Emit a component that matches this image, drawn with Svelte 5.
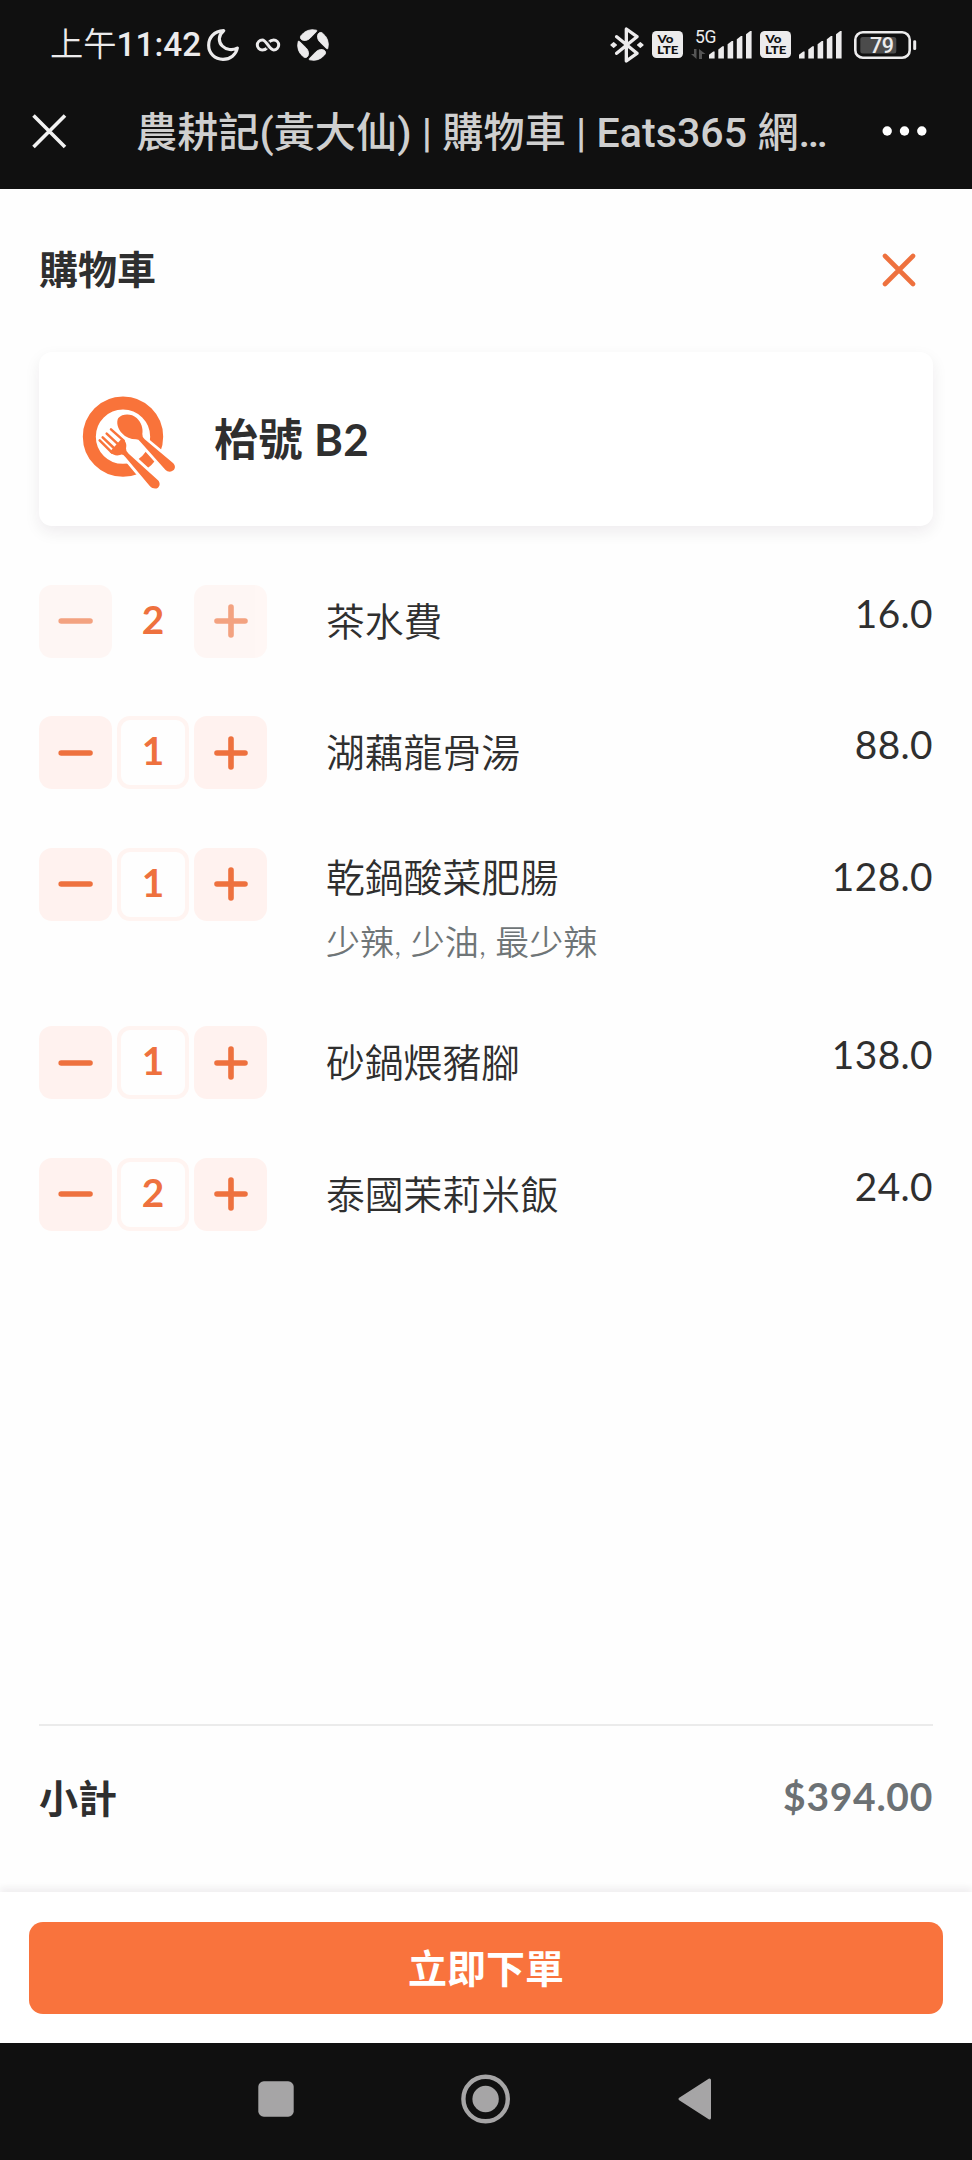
<script>
  const items = [
    { qty: 2, name: '茶水費', price: '16.0', locked: true },
    { qty: 1, name: '湖藕龍骨湯', price: '88.0' },
    { qty: 1, name: '乾鍋酸菜肥腸', price: '128.0', note: '少辣, 少油, 最少辣' },
    { qty: 1, name: '砂鍋煨豬腳', price: '138.0' },
    { qty: 2, name: '泰國茉莉米飯', price: '24.0' }
  ];
  const bars = [
    [0, 20.5], [9.3, 15.3], [18.6, 10], [27.8, 5], [37, 0]
  ];
</script>

{#snippet volte()}
  <svg class="volte" width="31" height="27" viewBox="0 0 31 27">
    <rect width="31" height="27" rx="4.5" fill="#ecebec" />
    <text x="5.4" y="12.4" textLength="16" lengthAdjust="spacingAndGlyphs" font-size="11.5">Vo</text>
    <text x="5" y="23.4" textLength="21.5" lengthAdjust="spacingAndGlyphs" font-size="12">LTE</text>
  </svg>
{/snippet}

{#snippet signal()}
  <svg class="signal" width="43" height="28" viewBox="0 0 43 28">
    {#each bars as [x, y]}
      <path d="M{x} 27.5V{y + 3.2}L{x + 4.2} {y}H{x + 5.6}V27.5Z" fill="#ecebec" />
    {/each}
  </svg>
{/snippet}

<div class="screen">
  <header class="top">
    <div class="status">
      <span class="clock"><span class="ampm">上午</span>11:42</span>
      <svg class="moon" width="32" height="32" viewBox="622 86 96 96">
        <path d="M672 91C642 92 627 113 627 135C627 160 646 177 670 177C692 177 709 163 713 143C699 151 680 149 668 137C655 124 656 104 672 91Z" fill="none" stroke="#ecebec" stroke-width="9.5" stroke-linejoin="round" />
      </svg>
      <svg class="loop" width="26" height="16" viewBox="0 0 26 16">
        <path d="M12.3 10.8C10.8 12.2 9.4 13 7.3 13A5 5 0 1 1 7.3 3C11.7 3 14.2 13 18.7 13A5 5 0 1 0 18.7 3C16.6 3 15.2 3.8 13.7 5.2" fill="none" stroke="#ecebec" stroke-width="3" />
        <path d="M9.6 8.2 13 12.6M13 3.4 16.4 7.8" stroke="#101010" stroke-width="1" />
      </svg>
      <svg class="aperture" width="32" height="32" viewBox="-16 -16 32 32">
        {#each [0, 90, 180, 270] as a}
          <path transform="rotate({a})" d="M-12.1-9.2A15.2 15.2 0 0 1 3.4-14.8C4.1-14.5 4-14 3.3-13.2L-3.2-6.6C-5.6-4.5-9-3.8-11.2-5.2C-12.6-6.2-13-8-12.1-9.2Z" fill="#ecebec" stroke="#ecebec" stroke-width=".9" />
        {/each}
      </svg>
      <div class="spacer"></div>
      <svg width="34" height="36" viewBox="372 78 102 108">
        <path d="M392 107 453 157 421 180V84L453 107 392 157" fill="none" stroke="#ecebec" stroke-width="10" stroke-linejoin="round" stroke-linecap="round" />
        <path d="M375 132 383 125 391 132 383 139ZM455 132 463 125 471 132 463 139Z" fill="#ecebec" stroke="#ecebec" stroke-width="4" stroke-linejoin="round" />
      </svg>
      {@render volte()}
      <div class="net">
        <span>5G</span>
        <svg width="15" height="10" viewBox="0 0 15 10">
          <path d="M5.5 0V10L0 5H3V0ZM8 10V0L14.5 5H11V10Z" fill="#555" />
        </svg>
      </div>
      {@render signal()}
      {@render volte()}
      {@render signal()}
      <svg class="battery" width="63" height="28" viewBox="0 0 63 28">
        <rect x="1.3" y="1.3" width="54.4" height="25.4" rx="7.5" fill="none" stroke="#ecebec" stroke-width="2.6" />
        <rect x="6.3" y="6" width="36" height="16.4" rx="2.5" fill="#4b4b4b" />
        <rect x="59.2" y="9.3" width="3" height="9.8" rx="1.3" fill="#ecebec" />
        <text x="16" y="21.7" textLength="24" font-size="21.5">79</text>
      </svg>
    </div>
    <div class="appbar">
      <svg width="35" height="35" viewBox="0 0 35 35"><path d="M1.5 1.5 33 33M33 1.5 1.5 33" stroke="#f2f2f2" stroke-width="3.6" /></svg>
      <h1>農耕記(黃大仙) | 購物車 | Eats365 網…</h1>
      <svg class="dots" width="46" height="12" viewBox="0 0 46 12" fill="#fff"><circle cx="5.2" cy="6" r="4.7" /><circle cx="22.5" cy="6" r="4.7" /><circle cx="39.8" cy="6" r="4.7" /></svg>
    </div>
  </header>

  <main>
    <div class="cart-head">
      <h2>購物車</h2>
      <svg width="34" height="34" viewBox="0 0 34 34"><path d="M3 3 31 31M31 3 3 31" stroke="#ee713e" stroke-width="4.6" stroke-linecap="round" /></svg>
    </div>

    <section class="table-card">
      <svg class="dish" width="100" height="100" viewBox="240 520 300 300">
        <circle cx="369" cy="648" r="101" fill="none" stroke="#f9733a" stroke-width="39" />
        <g fill="#f9733a" stroke="#fff" stroke-width="17" stroke-linejoin="round" paint-order="stroke">
          <path d="M355 592C368 578 394 578 410 592C424 605 430 624 427 640Q426 648 434 656L519 727C527 735 526 744 520 749C512 756 502 753 496 747L421 663Q416 656 408 656C392 656 377 650 366 638C353 624 348 604 355 592Z" />
          <path d="M366 653C378 662 381 672 378 683Q377 692 386 699L474 779C482 788 479 797 474 801C467 806 457 804 450 797L376 709Q368 699 360 703C350 706 339 704 329 694Z" />
        </g>
        <path d="M333 626 371 660M320 639 358 674M308 650 348 688M299 659 336 696" stroke="#f9733a" stroke-width="7.5" stroke-linecap="round" />
      </svg>
      <strong>枱號 B2</strong>
    </section>

    <ul class="items">
      {#each items as item}
        <li>
          <div class="stepper" class:locked={item.locked}>
            <span class="btn"><svg width="36" height="36" viewBox="0 0 36 36"><path d="M3.2 18H32" /></svg></span>
            <span class="qty">{item.qty}</span>
            <span class="btn"><svg width="36" height="36" viewBox="0 0 36 36"><path d="M4 18H32M18 4V32" /></svg></span>
          </div>
          <div class="info" class:with-note={item.note}>
            <span class="name">{item.name}</span>
            {#if item.note}<span class="note">{item.note}</span>{/if}
          </div>
          <span class="price">{item.price}</span>
        </li>
      {/each}
    </ul>

    <div class="subtotal">
      <span>小計</span>
      <span class="sum">$394.00</span>
    </div>
  </main>

  <div class="order"><button>立即下單</button></div>

  <nav>
    <svg width="36" height="36" viewBox="0 0 36 36"><rect x=".3" y=".3" width="35.4" height="35.4" rx="5.5" /></svg>
    <svg width="50" height="50" viewBox="0 0 50 50"><circle cx="24.6" cy="25" r="22.2" fill="none" stroke="#a6a5a6" stroke-width="4.4" /><circle cx="24.6" cy="25" r="13.2" /></svg>
    <svg width="34" height="42" viewBox="0 0 34 42"><path d="M2 21 31.5 2V40Z" stroke="#a6a5a6" stroke-width="3" stroke-linejoin="round" /></svg>
  </nav>
</div>

<style>
  :global(body) { margin: 0; }
  * { box-sizing: border-box; }
  svg { display: block; flex: none; }
  .screen {
    display: flex;
    flex-direction: column;
    width: 972px;
    height: 2160px;
    background: #fefefe;
    color: #2f2f2f;
    font-family: Lato, "Noto Sans CJK TC", sans-serif;
    overflow: hidden;
  }
  .top {
    height: 189px;
    background: #101010;
    color: #ecebec;
    font-family: Roboto, "Noto Sans CJK TC", sans-serif;
  }
  .status {
    display: flex;
    align-items: center;
    height: 89px;
    padding: 0 55px 0 50px;
  }
  .clock {
    font-size: 33.3px;
    line-height: 40px;
    font-weight: 500;
    white-space: nowrap;
    width: 157px;
    padding-top: 1px;
  }
  .ampm { font-weight: 350; }
  .loop { margin-left: 16px; }
  .aperture { margin-left: 16px; }
  .spacer { flex: 1; }
  .volte {
    margin-left: 8px;
    font-family: Lato, sans-serif;
    font-weight: 900;
    fill: #101010;
  }
  .net {
    display: flex;
    flex-direction: column;
    width: 26px;
    height: 29px;
    margin-left: 8px;
    margin-right: -16px;
    justify-content: space-between;
  }
  .net span {
    font-size: 17.5px;
    line-height: 14px;
    padding-left: 4px;
    letter-spacing: -.3px;
  }
  .signal { margin-left: 8px; }
  .battery {
    margin-left: 12px;
    font-weight: 500;
    fill: #ecebec;
  }
  .appbar {
    display: flex;
    align-items: center;
    height: 84px;
    padding: 0 44px 0 32px;
  }
  h1 {
    flex: 1;
    margin: 0 0 0 69px;
    padding-top: 3px;
    font-size: 41.1px;
    line-height: 60px;
    font-weight: 500;
    letter-spacing: .05px;
    color: #cfcfcf;
    white-space: nowrap;
  }
  main {
    flex: 1;
    display: flex;
    flex-direction: column;
    padding: 0 39px;
    min-height: 0;
  }
  .cart-head {
    display: flex;
    align-items: center;
    justify-content: space-between;
    height: 163px;
    padding-right: 17px;
    padding-bottom: 2px;
  }
  h2 {
    margin: 0;
    padding-bottom: 2px;
    font-size: 39px;
    line-height: 60px;
    font-weight: 700;
  }
  .table-card {
    display: flex;
    align-items: center;
    gap: 34px;
    height: 174px;
    padding-left: 41px;
    border-radius: 13px;
    background: #fff;
    box-shadow: 0 6px 16px rgba(40, 20, 40, .075);
  }
  .dish { margin-top: 9px; }
  .table-card strong {
    font-size: 44px;
    line-height: 60px;
    font-weight: 700;
    letter-spacing: .4px;
  }
  .items {
    display: flex;
    flex-direction: column;
    gap: 58.5px;
    margin: 58.5px 0 0;
    padding: 0;
    list-style: none;
  }
  li {
    display: flex;
    align-items: flex-start;
  }
  .stepper {
    display: flex;
    gap: 5px;
    width: 287px;
    flex: none;
  }
  .btn, .qty {
    display: flex;
    align-items: center;
    justify-content: center;
    width: 73px;
    height: 73px;
    border-radius: 13px;
  }
  .btn { background: #fff2ef; }
  .btn svg { fill: none; stroke: #ee713e; stroke-width: 5.6; stroke-linecap: round; }
  .qty {
    width: 72px;
    border: 4px solid #fff4f1;
    color: #ee713e;
    font-size: 38.8px;
    font-weight: 700;
    line-height: 60px;
    padding-bottom: 5px;
  }
  .locked .qty { border-color: transparent; }
  .locked .btn { opacity: .65; }
  .info {
    flex: 1;
    display: flex;
    flex-direction: column;
    padding-top: 7px;
  }
  .info.with-note { padding-top: 0; height: 120px; }
  .name { font-size: 38.8px; line-height: 58px; font-weight: 350; }
  .note { margin-top: 10px; font-size: 34px; line-height: 51px; font-weight: 350; color: #6f7577; }
  .price { font-size: 38.8px; line-height: 57px; letter-spacing: .4px; }
  .subtotal {
    display: flex;
    align-items: center;
    justify-content: space-between;
    height: 168px;
    margin-top: auto;
    padding-bottom: 27px;
    border-top: 2px solid #ebebeb;
    font-size: 39px;
    font-weight: 700;
  }
  .sum { color: #6c7174; letter-spacing: .7px; }
  .order {
    height: 151px;
    padding: 30px 29px;
    background: #fff;
    box-shadow: 0 -5px 6px rgba(40, 20, 30, .055);
  }
  button {
    display: block;
    width: 100%;
    height: 92px;
    padding: 0;
    border: 0;
    border-radius: 14px;
    background: #f9733d;
    color: #fff;
    font: 700 39px/92px Lato, "Noto Sans CJK TC", sans-serif;
  }
  nav {
    display: flex;
    align-items: center;
    height: 117px;
    padding: 0 0 6px 257.5px;
    background: #101010;
    fill: #a6a5a6;
    gap: 167px;
  }
</style>
